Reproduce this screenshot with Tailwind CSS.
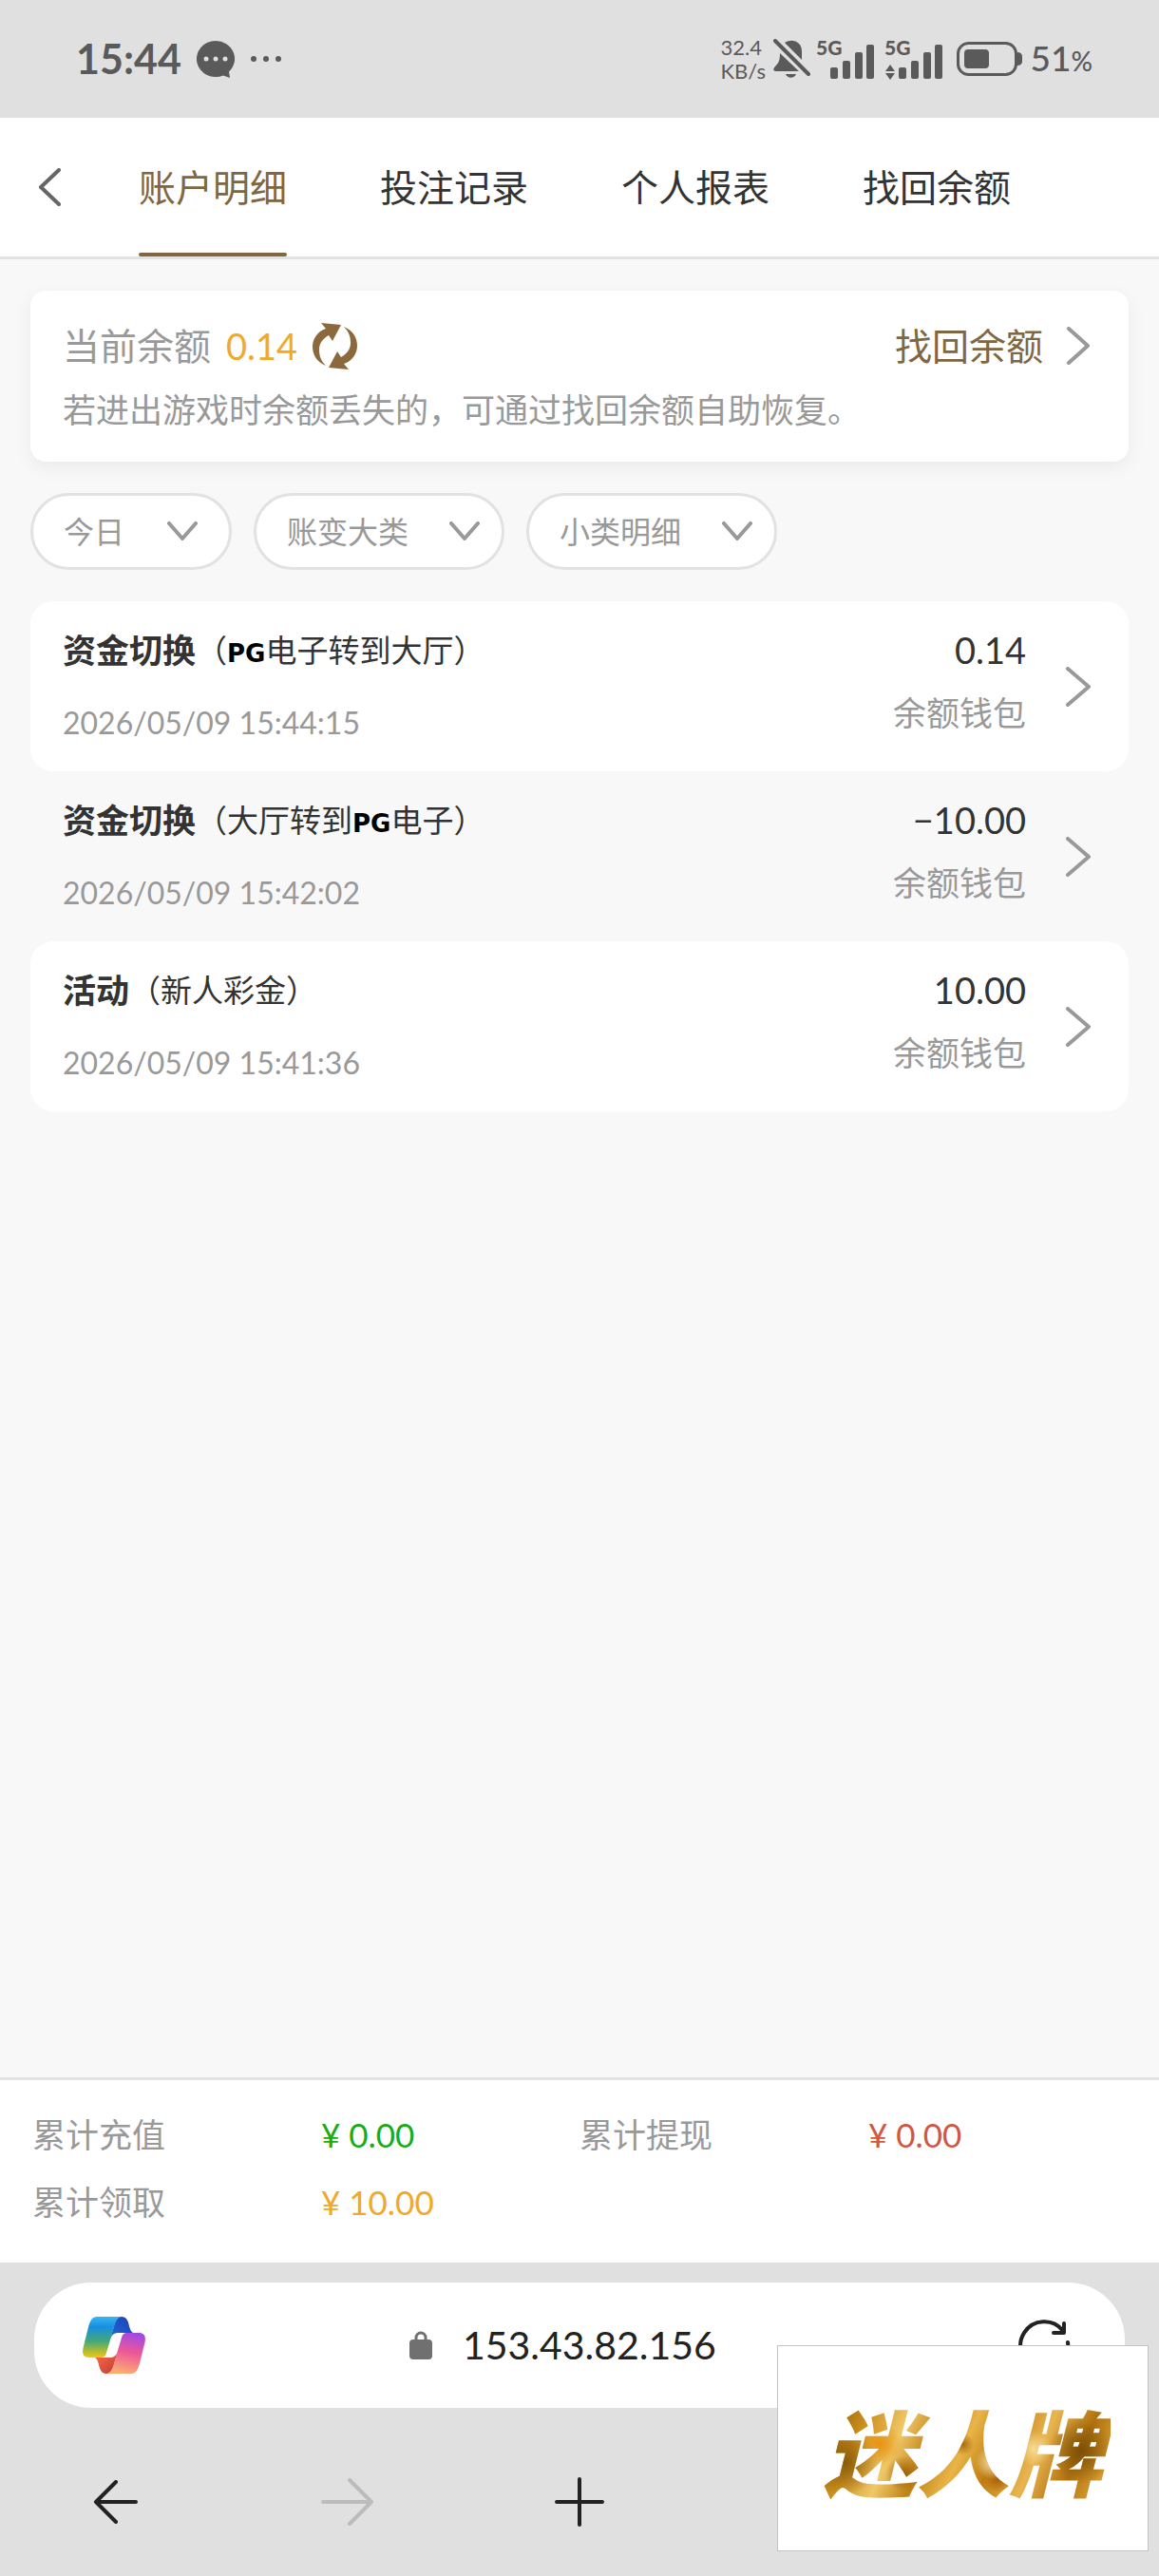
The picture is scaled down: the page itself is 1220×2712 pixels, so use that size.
<!DOCTYPE html>
<html lang="zh-CN">
<head>
  <meta charset="UTF-8" />
  <meta name="viewport" content="width=device-width, initial-scale=1.0" />
  <script src="https://cdn.jsdelivr.net/npm/@tailwindcss/browser@4"></script>
  <title>账户明细</title>
</head>
<body class="relative flex min-h-screen flex-col bg-[#f8f8f8] font-['Lato','Noto_Sans_CJK_SC',sans-serif] text-[35px] leading-[48px] text-[#333]">

  <!-- status bar -->
  <div class="flex h-[124px] items-center justify-between bg-[#e0e0e0] pl-20 pr-[70px] text-[#5a5a5a]">
    <div class="flex items-center gap-4">
      <span class="text-[43px] font-bold">15:44</span>
      <svg class="h-[39px] w-10" viewBox="0 0 40 39" fill="currentColor">
        <path d="M20 0a20 19 0 0 1 14 32.600L35 39l-7-2.600A20 19 0 1 1 20 0z" />
        <g fill="#e0e0e0"><circle cx="10" cy="19" r="2.500" /><circle cx="20" cy="19" r="2.500" /><circle cx="30" cy="19" r="2.500" /></g>
      </svg>
      <svg class="h-2 w-[34px]" viewBox="0 0 34 8" fill="currentColor">
        <circle cx="4" cy="4" r="3" /><circle cx="17" cy="4" r="3" /><circle cx="30" cy="4" r="3" />
      </svg>
    </div>

    <div class="flex items-center">
      <div class="w-[55px] text-[22px] leading-[25px]">
        <div>32.4</div>
        <div>KB/s</div>
      </div>
      <svg class="h-[42px] w-[39px]" viewBox="0 0 39 42" fill="currentColor">
        <path d="M12 4C20-1 30 3 30 13v9z" />
        <path d="M7 15l20 19H3c-4 0-3-3-1-5 4-4 5-7 5-14z" />
        <path d="M13 37h11c-2 5-9 5-11 0z" />
        <path d="M4 1l35 35" stroke="#e0e0e0" stroke-width="5" />
        <path d="M2 2l35 35" stroke="currentColor" stroke-width="4" stroke-linecap="round" />
      </svg>
      <svg class="mb-2 ml-1 h-[52px] w-[64px]" viewBox="0 -8 64 52" fill="currentColor">
        <text x="2" y="18" font-size="21" font-weight="900">5G</text>
        <rect x="17" y="31" width="8" height="12" rx="2" />
        <rect x="30" y="24" width="8" height="19" rx="2" />
        <rect x="43" y="15" width="8" height="28" rx="2" />
        <rect x="55" y="7" width="8" height="36" rx="2" />
      </svg>
      <svg class="mb-2 ml-2 h-[52px] w-[64px]" viewBox="0 -8 64 52" fill="currentColor">
        <text x="2" y="18" font-size="21" font-weight="900">5G</text>
        <path d="M8 28l5 7H3zM8 44l5-7H3z" />
        <rect x="17" y="31" width="8" height="12" rx="2" />
        <rect x="30" y="24" width="8" height="19" rx="2" />
        <rect x="43" y="15" width="8" height="28" rx="2" />
        <rect x="55" y="7" width="8" height="36" rx="2" />
      </svg>
      <svg class="ml-[14px] h-9 w-[70px]" viewBox="0 0 70 36" fill="currentColor">
        <rect x="1.500" y="1.500" width="61" height="33" rx="11" fill="none" stroke="currentColor" stroke-width="3" />
        <rect x="8" y="8" width="26" height="20" rx="4" />
        <path d="M64 11c3 0 5 2 5 4v6c0 2-2 4-5 4z" />
      </svg>
      <span class="ml-2 text-[37px] font-medium">51<span class="text-[28px]">%</span></span>
    </div>
  </div>

  <!-- tabs -->
  <header class="flex h-[149px] border-b-[3px] border-[#e3e3e3] bg-white">
    <button type="button" aria-label="返回" class="w-[146px] pl-10">
      <svg class="h-10 w-6" viewBox="0 0 24 40" fill="none" stroke="#666" stroke-width="4" stroke-linecap="round" stroke-linejoin="round"><path d="M22 2L3 20l19 18" /></svg>
    </button>
    <nav class="flex gap-[98px] text-[39px]">
      <a href="#" class="relative flex items-center text-[#806742]">账户明细<span class="absolute inset-x-0 bottom-0 h-1 rounded-full bg-[#806742]"></span></a>
      <a href="#" class="flex items-center">投注记录</a>
      <a href="#" class="flex items-center">个人报表</a>
      <a href="#" class="flex items-center">找回余额</a>
    </nav>
  </header>

  <main class="flex-1 px-8 pt-[33px]">
    <!-- balance -->
    <section class="rounded-2xl bg-white pb-[31px] pl-[34px] pr-10 pt-[34px] text-[#999] shadow-[0_6px_20px_rgba(0,0,0,0.06)]">
      <div class="flex h-12 items-center text-[39px]">
        <span>当前余额</span>
        <span class="ml-4 text-[38px] text-[#f0a92b]">0.14</span>
        <button type="button" aria-label="刷新余额" class="ml-4">
          <svg class="h-[49px] w-[47px]" viewBox="0 0 47 49" fill="#8b693d">
            <path id="half" d="M14 45C4 41 0 33 0 25 0 17 5 9 14 6L9 0l21 2-9 17-4-6C10 17 7 22 7 28c0 7 2 12 7 17z" />
            <use href="#half" transform="rotate(180 23.500 24.500)" />
          </svg>
        </button>
        <a href="#" class="ml-auto flex items-center gap-6 text-[#806742]">
          找回余额
          <svg class="h-10 w-[26px]" viewBox="0 0 26 40" fill="none" stroke="#999" stroke-width="4" stroke-linecap="round" stroke-linejoin="round"><path d="M3 2l20 18L3 38" /></svg>
        </a>
      </div>
      <p class="mt-[19px]">若进出游戏时余额丢失的，可通过找回余额自助恢复。</p>
    </section>

    <!-- filters -->
    <form class="mt-[33px] flex gap-[23px] text-[32px] text-[#999]">
      <label class="relative">
        <select aria-label="日期" class="h-[81px] w-[212px] appearance-none rounded-full border-[3px] border-[#e2e2e2] bg-white pl-8"><option>今日</option></select>
        <svg class="pointer-events-none absolute right-9 top-[30px] h-5 w-8" viewBox="0 0 32 20" fill="none" stroke="#999" stroke-width="4" stroke-linecap="round" stroke-linejoin="round"><path d="M2 2l14 16L30 2" /></svg>
      </label>
      <label class="relative">
        <select aria-label="账变大类" class="h-[81px] w-[264px] appearance-none rounded-full border-[3px] border-[#e2e2e2] bg-white pl-8"><option>账变大类</option></select>
        <svg class="pointer-events-none absolute right-[26px] top-[30px] h-5 w-8" viewBox="0 0 32 20" fill="none" stroke="#999" stroke-width="4" stroke-linecap="round" stroke-linejoin="round"><path d="M2 2l14 16L30 2" /></svg>
      </label>
      <label class="relative">
        <select aria-label="小类明细" class="h-[81px] w-[264px] appearance-none rounded-full border-[3px] border-[#e2e2e2] bg-white pl-8"><option>小类明细</option></select>
        <svg class="pointer-events-none absolute right-[26px] top-[30px] h-5 w-8" viewBox="0 0 32 20" fill="none" stroke="#999" stroke-width="4" stroke-linecap="round" stroke-linejoin="round"><path d="M2 2l14 16L30 2" /></svg>
      </label>
    </form>

    <!-- records -->
    <ul class="mt-[33px]">
      <li>
        <a href="#" class="flex rounded-3xl bg-white py-[27px] pl-[34px] pr-10">
          <div>
            <h2 class="flex h-12 items-center"><b>资金切换</b><span class="text-[33px]">（<span class="font-['DejaVu_Sans'] text-[26px] leading-none font-bold text-black">PG</span>电子转到大厅）</span></h2>
            <time class="mt-[29px] block text-[32px] text-[#999]">2026/05/09 15:44:15</time>
          </div>
          <div class="ml-auto text-right">
            <div class="text-[38px]">0.14</div>
            <div class="mt-[18px] text-[#999]">余额钱包</div>
          </div>
          <svg class="ml-[42px] h-[42px] w-[26px] self-center" viewBox="0 0 26 42" fill="none" stroke="#999" stroke-width="4" stroke-linecap="round" stroke-linejoin="round"><path d="M2 2l22 19L2 40" /></svg>
        </a>
      </li>
      <li>
        <a href="#" class="flex rounded-3xl py-[27px] pl-[34px] pr-10">
          <div>
            <h2 class="flex h-12 items-center"><b>资金切换</b><span class="text-[33px]">（大厅转到<span class="font-['DejaVu_Sans'] text-[26px] leading-none font-bold text-black">PG</span>电子）</span></h2>
            <time class="mt-[29px] block text-[32px] text-[#999]">2026/05/09 15:42:02</time>
          </div>
          <div class="ml-auto text-right">
            <div class="text-[38px]">−10.00</div>
            <div class="mt-[18px] text-[#999]">余额钱包</div>
          </div>
          <svg class="ml-[42px] h-[42px] w-[26px] self-center" viewBox="0 0 26 42" fill="none" stroke="#999" stroke-width="4" stroke-linecap="round" stroke-linejoin="round"><path d="M2 2l22 19L2 40" /></svg>
        </a>
      </li>
      <li>
        <a href="#" class="flex rounded-3xl bg-white py-[27px] pl-[34px] pr-10">
          <div>
            <h2 class="flex h-12 items-center"><b>活动</b><span class="text-[33px]">（新人彩金）</span></h2>
            <time class="mt-[29px] block text-[32px] text-[#999]">2026/05/09 15:41:36</time>
          </div>
          <div class="ml-auto text-right">
            <div class="text-[38px]">10.00</div>
            <div class="mt-[18px] text-[#999]">余额钱包</div>
          </div>
          <svg class="ml-[42px] h-[42px] w-[26px] self-center" viewBox="0 0 26 42" fill="none" stroke="#999" stroke-width="4" stroke-linecap="round" stroke-linejoin="round"><path d="M2 2l22 19L2 40" /></svg>
        </a>
      </li>
    </ul>
  </main>

  <!-- totals -->
  <dl class="grid grid-cols-4 gap-y-[23px] border-t-[3px] border-[#e3e3e3] bg-white px-[34px] pb-10 pt-[33px]">
    <dt class="text-[#999]">累计充值</dt>
    <dd class="pl-4 text-[#18ac18]">¥ 0.00</dd>
    <dt class="text-[#999]">累计提现</dt>
    <dd class="pl-4 text-[#cf5845]">¥ 0.00</dd>
    <dt class="text-[#999]">累计领取</dt>
    <dd class="pl-4 text-[#f0a92b]">¥ 10.00</dd>
  </dl>

  <!-- browser bar -->
  <footer class="bg-[#e0e0e0] px-9 pt-[21px] text-[#222]">
    <div class="grid h-[132px] grid-cols-[1fr_auto_1fr] items-center rounded-[60px] bg-white pl-[51px] pr-[57px]">
      <button type="button" aria-label="Copilot" class="justify-self-start">
        <svg class="h-[60px] w-[66px]" viewBox="0 0 66 60">
          <defs>
            <linearGradient id="blue" x1="0" y1="0" x2="0" y2="1"><stop offset="0" stop-color="#39b5f2" /><stop offset=".25" stop-color="#178fe0" /><stop offset=".6" stop-color="#45a878" /><stop offset="1" stop-color="#f3c80c" /></linearGradient>
            <linearGradient id="navy" x1="1" y1="0" x2="0" y2="1"><stop offset="0" stop-color="#1c3fae" /><stop offset="1" stop-color="#2368dd" /></linearGradient>
            <linearGradient id="pink" x1=".6" y1="0" x2=".4" y2="1"><stop offset="0" stop-color="#a04be4" /><stop offset=".45" stop-color="#ee5698" /><stop offset="1" stop-color="#fbb071" /></linearGradient>
            <linearGradient id="red" x1="0" y1="0" x2="1" y2="1"><stop offset="0" stop-color="#fb7048" /><stop offset="1" stop-color="#c23a36" /></linearGradient>
          </defs>
          <path fill="url(#navy)" d="M36 0h5c10 0 6 16 13 17H38c-5 0-7 2-9 6z" />
          <path fill="url(#blue)" d="M15 0h26c-6 1-8 10-10 18l-6 20c-1 4-3 5-6 5H7C0 43-1 38 1 31L6 11C8 4 10 0 15 0z" />
          <path fill="url(#red)" d="M30 60h-5c-10 0-6-16-13-17h16c5 0 7-2 9-6z" />
          <path fill="url(#pink)" d="M51 60H25c6-1 8-10 10-18l6-20c1-4 3-5 6-5h12c7 0 8 5 6 12l-5 20c-2 7-4 11-9 11z" />
        </svg>
      </button>
      <label class="flex items-center gap-8 pr-7">
        <svg class="h-[30px] w-6" viewBox="0 0 24 30"><rect y="9" width="24" height="21" rx="4" fill="#707070" /><path d="M7 11V7a5 5 0 0 1 10 0v4" fill="none" stroke="#707070" stroke-width="3" /></svg>
        <input type="text" aria-label="网址" value="153.43.82.156" class="w-[268px] text-[41px] outline-none" />
      </label>
      <button type="button" aria-label="重新加载" class="justify-self-end">
        <svg class="h-14 w-14" viewBox="0 0 56 56" fill="none" stroke="#222" stroke-width="4" stroke-linecap="round" stroke-linejoin="round"><path d="M53 25a25 25 0 1 1-5-12M49 5v10H38" /></svg>
      </button>
    </div>
    <nav class="-mx-9 grid h-[177px] grid-cols-5 place-items-center pt-5">
      <button type="button" aria-label="后退">
        <svg class="h-[46px] w-12" viewBox="0 0 48 46" fill="none" stroke="#222" stroke-width="4" stroke-linecap="round" stroke-linejoin="round"><path d="M24 2L3 23l21 21M3 23h42" /></svg>
      </button>
      <button type="button" aria-label="前进">
        <svg class="h-[50px] w-14" viewBox="0 0 56 50" fill="none" stroke="#bcbcbc" stroke-width="4" stroke-linecap="round" stroke-linejoin="round"><path d="M30 2l23 23-23 23M53 25H2" /></svg>
      </button>
      <button type="button" aria-label="新建标签页">
        <svg class="h-[52px] w-[52px]" viewBox="0 0 52 52" fill="none" stroke="#222" stroke-width="4" stroke-linecap="round"><path d="M26 2v48M2 26h48" /></svg>
      </button>
    </nav>
  </footer>

  <!-- floating brand card -->
  <div class="absolute bottom-[26px] right-[11px] flex h-[217px] w-[391px] items-center justify-center border border-[#c4c4c4] bg-white">
    <span class="bg-[radial-gradient(circle_at_22%_46%,#e8940f_0,transparent_9%),radial-gradient(circle_at_10%_62%,#8a5a08_0,transparent_12%),radial-gradient(circle_at_30%_72%,#9c5f06_0,transparent_8%),radial-gradient(circle_at_50%_46%,#a8690c_0,transparent_7%),radial-gradient(circle_at_60%_62%,#f7e3ae_0,transparent_9%),radial-gradient(circle_at_62%_76%,#a55e05_0,transparent_7%),radial-gradient(circle_at_74%_50%,#f6dc94_0,transparent_8%),radial-gradient(circle_at_90%_52%,#7d4f06_0,transparent_12%),linear-gradient(115deg,#9a660c_8%,#c98d1c_18%,#f0c868_30%,#c08216_40%,#e9b548_50%,#c07c12_60%,#e9b550_72%,#b0720f_84%,#d8a034_94%)] bg-clip-text px-2 font-['Noto_Sans_CJK_SC'] text-[98px] leading-[120px] font-black italic text-transparent">迷人牌</span>
  </div>

</body>
</html>
